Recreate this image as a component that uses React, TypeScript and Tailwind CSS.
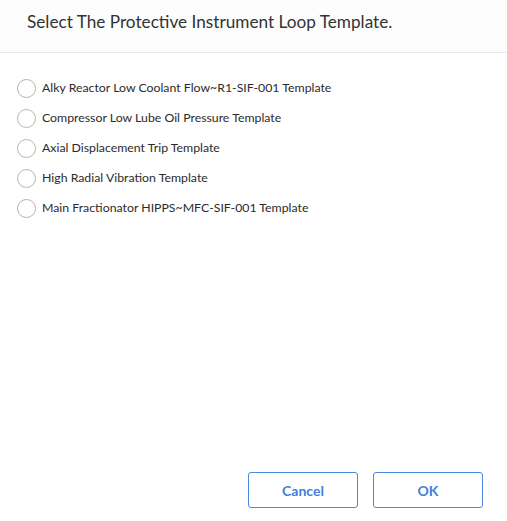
const templates = [
  'Alky Reactor Low Coolant Flow~R1-SIF-001 Template',
  'Compressor Low Lube Oil Pressure Template',
  'Axial Displacement Trip Template',
  'High Radial Vibration Template',
  'Main Fractionator HIPPS~MFC-SIF-001 Template',
];

export default function App() {
  return (
    <div className="w-[507px] h-[521px] bg-white flex flex-col font-['Lato','Liberation_Sans',sans-serif]">
      <div className="h-[53px] shrink-0 bg-[#fdfdfd] border-b border-[#e6eaea] pl-[27px] pt-[10px]">
        <h1 className="text-[17.2px] leading-[24px] text-[#333]">Select The Protective Instrument Loop Template.</h1>
      </div>
      <div className="flex-1 flex flex-col gap-[12px] pt-[26px] pl-[17px]">
        {templates.map((t) => (
          <label key={t} className="flex items-center gap-[6px] h-[18px]">
            <span className="w-[19px] h-[19px] rounded-full border border-[#b5b5b5] bg-white shrink-0" />
            <span className="text-[12.3px] text-[#2b2b2b]">{t}</span>
          </label>
        ))}
      </div>
      <div className="flex justify-end gap-[15px] pr-[24px] pb-[13px]">
        <button className="w-[110px] h-[36px] rounded-[3px] border border-[#4b88e0] text-[#3f7fdc] text-[14px] font-bold bg-white">Cancel</button>
        <button className="w-[110px] h-[36px] rounded-[3px] border border-[#4b88e0] text-[#3f7fdc] text-[14px] font-bold bg-white">OK</button>
      </div>
    </div>
  );
}
